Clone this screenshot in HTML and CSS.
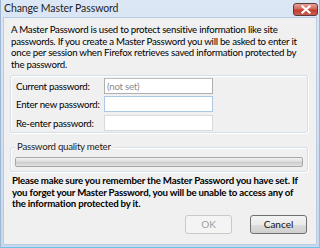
FILE: index.html
```html
<!DOCTYPE html>
<html>
<head>
<meta charset="utf-8">
<link rel="stylesheet" href="styles.css">
</head>
<body>
<div class="window">
  <div class="titlebar">
    <span class="title">Change Master Password</span>
    <span class="close"><svg width="12" height="9" viewBox="0 0 12 9"><path d="M2.5 1.5 L9.5 7.5 M9.5 1.5 L2.5 7.5" stroke="#fff" stroke-width="2.2" stroke-linecap="square"/></svg></span>
  </div>
  <div class="client">
    <p class="intro">A Master Password is used to protect sensitive information like site<br>passwords. If you create a Master Password you will be asked to enter it<br>once per session when Firefox retrieves saved information protected by<br>the password.</p>
    <div class="group fields">
      <div class="row"><label>Current password:</label><div class="input disabled">(not set)</div></div>
      <div class="row"><label>Enter new password:</label><div class="input focused"></div></div>
      <div class="row"><label>Re-enter password:</label><div class="input"></div></div>
    </div>
    <div class="group meter">
      <span class="legend">Password quality meter</span>
      <div class="bar"></div>
    </div>
    <p class="warning">Please make sure you remember the Master Password you have set. If<br>you forget your Master Password, you will be unable to access any of<br>the information protected by it.</p>
    <div class="buttons">
      <button class="btn ok">OK</button>
      <button class="btn cancel">Cancel</button>
    </div>
  </div>
</div>
</body>
</html>
```
FILE: styles.css
```css
* { box-sizing: border-box; }
html, body { margin: 0; padding: 0; }
body {
  font-family: Lato, "Noto Sans", "Liberation Sans", sans-serif;
  font-size: 9.7px;
  letter-spacing: -0.25px;
  color: #000;
  background: #fff;
}
.window {
  width: 320px;
  height: 248px;
  display: flex;
  flex-direction: column;
  background: linear-gradient(#dce7f5, #c9d9ee);
  border-left: 1px solid #9fb6d2;
  border-right: 1px solid #9fb6d2;
  border-bottom: 1px solid #6cc2e4;
}
.titlebar {
  height: 17px;
  display: flex;
  align-items: flex-start;
  justify-content: space-between;
  padding: 0 1px 0 3px;
}
.title {
  font-size: 10.5px;
  letter-spacing: -0.1px;
  line-height: 16px;
  color: #1e1e1e;
}
.close {
  width: 25px;
  height: 13px;
  margin-top: 3px;
  border: 1px solid #5e3a3f;
  border-radius: 3px;
  background: linear-gradient(#e5a49a 0%, #d4665a 45%, #c03c2c 55%, #c95f4f 100%);
  display: flex;
  align-items: center;
  justify-content: center;
}
.client {
  flex: 1;
  margin: 0 2px 2px 2px;
  background: #f0f0f0;
  border: 1px solid #b8cbe2;
  display: flex;
  flex-direction: column;
}
.intro, .warning {
  white-space: nowrap;
}
.intro {
  margin: 6px 8px 0 7px;
  line-height: 11.7px;
}
.group {
  margin: 0 8px 0 6px;
  border: 1px solid #d5dfe5;
  border-radius: 3px;
  box-shadow: inset 1px 1px 0 #fff, 1px 1px 0 #fff;
}
.fields {
  margin-top: 4px;
  height: 58px;
  padding: 2px 0 0 5px;
  display: flex;
  flex-direction: column;
  gap: 2.5px;
}
.row {
  display: flex;
  align-items: center;
  height: 16px;
}
.row label {
  flex: none;
  width: 88px;
  white-space: nowrap;
}
.input {
  flex: none;
  width: 109px;
  height: 16px;
  background: #fff;
  border: 1px solid #dadada;
  padding-left: 2px;
  line-height: 14px;
  color: #8c8c8c;
}
.input.disabled { border-color: #aeaeae; border-top-color: #c0c0c0; }
.input.focused { border-color: #aac8e4; }
.meter {
  position: relative;
  margin-top: 14px;
  height: 25px;
  padding: 9px 4px 0 4px;
}
.legend {
  position: absolute;
  top: -9px;
  left: 4px;
  padding: 0 2px;
  background: #f0f0f0;
  line-height: 14px;
  color: #222;
}
.bar {
  height: 10px;
  border: 1px solid #a9a9a9;
  border-radius: 2px;
  background: linear-gradient(#f2f2f2, #dadada 50%, #cdcdcd 55%, #e2e2e2);
}
.warning {
  margin: 3px 8px 0 8px;
  font-weight: bold;
  letter-spacing: -0.2px;
  line-height: 11.7px;
}
.buttons {
  display: flex;
  justify-content: flex-end;
  gap: 18px;
  margin: 5px 9px 0 0;
}
.btn {
  height: 19px;
  font-family: inherit;
  font-size: 10px;
  letter-spacing: 0;
  padding: 0;
  border-radius: 3px;
}
.ok {
  width: 47px;
  color: #a0a0a0;
  border: 1px solid #c9c9c9;
  background: #f4f4f4;
}
.cancel {
  width: 57px;
  color: #111;
  border: 1px solid #707070;
  background: linear-gradient(#f3f3f3, #ebebeb 50%, #dddddd 52%, #cfcfcf);
}
```
